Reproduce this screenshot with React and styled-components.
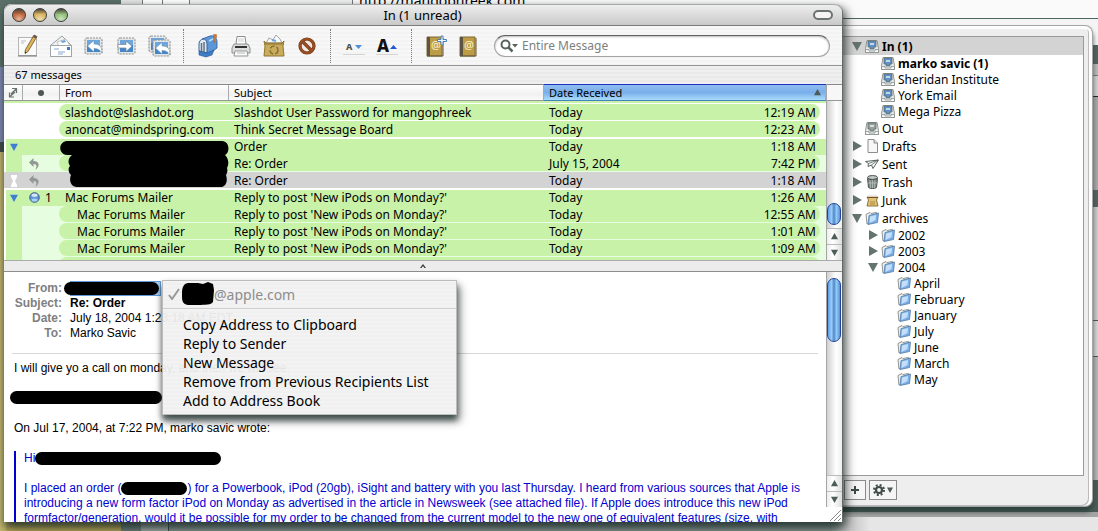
import React from 'react';
import styled, { createGlobalStyle, css } from 'styled-components';

const lucida = '"Noto Sans", "Open Sans", sans-serif';
const helvetica = '"Liberation Sans", Arial, sans-serif';

const green = '#c9f2a9';
const paleGreen = '#e6fddf';
const pinstripe = 'repeating-linear-gradient(#f7f7f7 0 2px, #f3f3f3 2px 4px)';

const GlobalStyle = createGlobalStyle`
  * { box-sizing: border-box; }
  body { margin: 0; overflow: hidden; }
  button, input { font: inherit; color: inherit; }
  button { padding: 0; border: 0; background: none; }
  svg { display: block; flex: none; }
`;

const Desktop = styled.div`
  position: relative;
  display: flex;
  align-items: stretch;
  height: 100vh;
  padding: 4px 5px 9px 4px;
  overflow: hidden;
  font-family: ${lucida};
  font-size: 12px;
  color: #000;
  background:
    linear-gradient(90deg, #5b7068 0 121px, #e4e4e4 121px 142px, #777 142px 143px, #fff 143px 162px, #777 162px 163px, #fff 163px 189px, #777 189px 190px, #f1f1f1 190px 352px, #777 352px 353px, #fafafa 353px) 0 0 / 100% 18px no-repeat,
    linear-gradient(#4a6660 0 1px, #f4f4f4 1px) 842px 18px / 100% 9px no-repeat,
    linear-gradient(#5b7068 0 67px, #8289b4 67px 142px, #3f4a48 142px 152px, #c5b76d 152px) 0 0 / 6px 100% no-repeat,
    linear-gradient(90deg, #b9a655 0 121px, #6d7c78 121px 141px, #a3a8a6 141px 168px, #3d4947 168px 169px, #84918d 169px 830px, #c4c4c4 850px, #e6e6e6 870px) 0 100% / 100% 14px no-repeat,
    linear-gradient(#f4f4f4 0 45px, #54635e 45px 64px, #bbb 64px 75px, #777 75px 76px, #d0d0d0 76px 96px, #222 96px 97px, #a9a9a9 97px 190px, #54635e 190px 207px, #ccc 207px 320px, #555 320px 321px, #d5d5d5 321px 356px, #555 356px 357px, #b7b7b7 357px 480px, #4b5c57 480px 512px, #a5a5a5 512px 517px, #4b5c57 517px 518px, #e4e4e4 518px);
`;

const BackgroundUrl = styled.span`
  position: absolute;
  top: -7px;
  left: 359px;
  font-size: 14px;
  line-height: 16px;
`;

const MailWindow = styled.main`
  position: relative;
  z-index: 2;
  flex: 1;
  min-width: 0;
  display: flex;
  flex-direction: column;
  background: #fff;
  border-radius: 8px 8px 0 0;
  box-shadow: 0 5px 9px rgba(30, 50, 45, 0.8), 1px 0 0 #8b8b8b, 6px 4px 10px rgba(0, 0, 0, 0.4);
`;

const TitleBar = styled.header`
  display: flex;
  align-items: center;
  height: 22px;
  padding: 0 9px 0 8px;
  border-bottom: 1px solid #7c7c7c;
  border-radius: 8px 8px 0 0;
  background: linear-gradient(#f0f0f0, #dedede 45%, #c9c9c9);
  box-shadow: inset 0 1px 0 #aaa;
`;

const WindowControls = styled.div`
  display: flex;
  gap: 7px;
  width: 76px;
`;

const Light = styled.button`
  width: 14px;
  height: 14px;
  border: 1px solid #3a3f3c;
  border-radius: 50%;
  background:
    radial-gradient(circle at 50% 85%, #fff8 0, transparent 50%),
    linear-gradient(#4b423e, ${({ tint }) => tint} 45%);
`;

const WindowTitle = styled.h1`
  flex: 1;
  margin: 0;
  font-size: 13px;
  font-weight: 400;
  line-height: 20px;
  text-align: center;
`;

const ToolbarToggle = styled.div`
  display: flex;
  justify-content: flex-end;
  width: 76px;

  button {
    width: 20px;
    height: 10px;
    border: 2px solid #6b7471;
    border-radius: 5px;
    background: #f4f4f4;
  }
`;

const Toolbar = styled.div`
  display: flex;
  align-items: center;
  height: 40px;
  padding: 0 12px 0 7px;
  border-bottom: 1px solid #949494;
  background: ${pinstripe};
`;

const ToolButton = styled.button`
  display: flex;
  align-items: center;
  justify-content: center;
  width: 33px;
  height: 32px;
`;

const Divider = styled.span`
  height: 34px;
  margin: 0 7px;
  border-left: 1px dotted #777;
`;

const SearchField = styled.label`
  display: flex;
  align-items: center;
  gap: 4px;
  flex: 1;
  height: 22px;
  margin-left: 9px;
  padding: 0 12px 0 5px;
  border: 1px solid #a3a3a3;
  border-top-color: #606060;
  border-radius: 11px;
  background: #fff;
  box-shadow: inset 0 1px 2px #bbb;

  input {
    flex: 1;
    min-width: 0;
    padding: 0;
    border: 0;
    outline: 0;
    background: transparent;
  }
  input::placeholder {
    color: #7d817d;
    opacity: 1;
  }
`;

const StatusLine = styled.div`
  height: 18px;
  padding-left: 11px;
  font-size: 11px;
  line-height: 18px;
  background: repeating-linear-gradient(#efefef 0 2px, #e9e9e9 2px 4px);
`;

const ListPane = styled.section`
  display: flex;
  height: 176px;
`;

const Messages = styled.table`
  display: flex;
  flex-direction: column;
  flex: 1;
  min-width: 0;

  thead { display: block; }
  tbody {
    display: flex;
    flex-direction: column;
    flex: 1;
    min-height: 0;
    overflow: hidden;
  }
  th, td { padding: 0; }
`;

const columns = css`
  display: grid;
  grid-template-columns: 19px 37px 169px minmax(0, 315fr) minmax(0, 282fr);
`;

const HeadRow = styled.tr`
  ${columns}
  height: 17px;
  border-top: 1px solid #888;
  border-bottom: 1px solid #999;
  font-size: 11px;
  line-height: 15px;
  background: linear-gradient(#fff, #f1f1f1 60%, #fafafa);
`;

const HeadCell = styled.th`
  display: flex;
  align-items: center;
  justify-content: ${({ center }) => (center ? 'center' : 'space-between')};
  border-right: 1px solid #aaa;
  font-weight: 400;
  && { padding: ${({ center }) => (center ? '0' : '0 4px 0 5px')}; }
  ${({ sorted }) => sorted && css`
    background: linear-gradient(#8fbdf0, #79aeea 50%, #a9dcfb);
    box-shadow: 0 -1px 0 #1c34c0, 0 1px 0 #4381bf;
  `}
`;

const PartialRow = styled.tr`
  flex: none;
  height: 3px;
  border-bottom: 1px solid #fff;
  background: ${green};
`;

const Row = styled.tr`
  ${columns}
  position: relative;
  flex: none;
  height: 17px;
  line-height: 17px;
  white-space: nowrap;
  background: ${({ kind }) => ({
    plain: '#fff',
    head: `linear-gradient(90deg, #fff 2px, transparent 2px), linear-gradient(#fff 1px, ${green} 1px)`,
    child: `linear-gradient(90deg, #fff 2px, ${green} 2px 18px, ${paleGreen} 18px)`,
    selected: 'linear-gradient(#d3d3d3 16px, #fff 16px)',
  }[kind])};

  ${({ kind }) => (kind === 'plain' || kind === 'child') && css`
    td:nth-child(n + 3) {
      height: 16px;
      background: ${green};
    }
    td:nth-child(3) {
      margin-left: -1px;
      padding-left: 6px;
      border-radius: 8px 0 0 8px;
    }
    td:nth-child(5) {
      margin-right: 6px;
      border-radius: 0 8px 8px 0;
    }
  `}
`;

const MarkCell = styled.td`
  display: flex;
  align-items: center;
  gap: 5px;
  justify-content: ${({ thread }) => (thread ? 'center' : 'flex-start')};
  && { padding-left: ${({ thread }) => (thread ? '0' : '6px')}; }
`;

const TextCell = styled.td`
  && { padding-left: 5px; }
  text-indent: ${({ nested }) => (nested ? '12px' : '0')};
`;

const DateCell = styled.td`
  display: flex;
  justify-content: space-between;
  && { padding: 0 ${({ inset }) => (inset ? 4 : 10)}px 0 5px; }
`;

const Scribble = styled.svg`
  position: absolute;
  z-index: 1;
  top: 3px;
  left: 56px;
`;

const Scrollbar = styled.div`
  display: flex;
  flex-direction: column;
  flex: ${({ tall }) => (tall ? 1 : 'none')};
  width: 16px;
  border-left: 1px solid #a5a5a5;
  background: linear-gradient(90deg, #cfcfcf, #fff 60%, #eee);
`;

const ScrollCorner = styled.div`
  height: 17px;
  border-top: 1px solid #888;
  border-bottom: 1px solid #999;
  background: #f7f7f7;
`;

const Track = styled.div`
  display: flex;
  flex-direction: column;
  justify-content: ${({ end }) => (end ? 'flex-end' : 'flex-start')};
  flex: 1;
  padding: 6px 1px 3px 0;
`;

const Thumb = styled.div`
  height: ${({ size }) => size}px;
  border: 1px solid #24449a;
  border-radius: 7px;
  background:
    linear-gradient(90deg, #5f9fe6, #9ccbf6 30%, #4c88c9 50%, #95cbf8 70%, #5793d6);
`;

const Arrow = styled.button`
  display: flex;
  align-items: center;
  justify-content: center;
  height: 16px;
  border-top: 1px solid #bbb;
  background: linear-gradient(90deg, #eee, #fff 40%, #ddd);
`;

const Splitter = styled.div`
  display: flex;
  justify-content: center;
  height: 12px;
  padding-top: 3px;
  border-top: 1px solid #aaa;
  border-bottom: 1px solid #8d8d8d;
  background: #ececec;
`;

const Reader = styled.section`
  position: relative;
  display: flex;
  flex: 1;
  min-height: 0;
  font-family: ${helvetica};
  line-height: 15px;
`;

const Letter = styled.article`
  flex: 1;
  min-width: 0;
  padding: 9px 8px 0;
  overflow: hidden;
`;

const Fields = styled.dl`
  display: grid;
  grid-template-columns: 50px 1fr;
  column-gap: 8px;
  margin: 0;
  padding-bottom: 12px;
  border-bottom: 1px solid #d6d6d6;

  dt {
    color: #7f7f7f;
    font-weight: 700;
    text-align: right;
  }
  dd {
    display: flex;
    align-items: center;
    height: 15px;
    margin: 0;
  }
`;

const Sender = styled.span`
  display: flex;
  align-items: center;
  width: 91px;
  height: 15px;
  border: 1px solid #5f97d8;
  background: #a9ccf2;
`;

const Redacted = styled.span`
  display: inline-block;
  flex: none;
  width: ${({ width }) => width}px;
  height: 13px;
  margin-left: ${({ pull }) => (pull ? '-7px' : '0')};
  border-radius: 7px;
  background: #000;
  vertical-align: middle;
`;

const Body = styled.div`
  padding: 7px 0 0 2px;

  p { margin: 0 0 15px; }
`;

const Censored = styled.p`
  display: flex;
  height: 15px;
  && { margin-left: -4px; }
`;

const Quote = styled.blockquote`
  margin: 0;
  padding-left: 8px;
  border-left: 2px solid #0000d0;
  color: #0000d0;
`;

const ReaderSide = styled.div`
  display: flex;
  flex-direction: column;
`;

const Menu = styled.ul`
  position: absolute;
  z-index: 3;
  top: 8px;
  left: 158px;
  width: 295px;
  height: 135px;
  margin: 0;
  padding: 4px 0 0;
  border: 1px solid #bcbcbc;
  list-style: none;
  font-family: ${lucida};
  font-size: 14px;
  background: repeating-linear-gradient(rgba(242, 242, 242, 0.95) 0 2px, rgba(239, 239, 239, 0.95) 2px 4px);
  box-shadow: 0 5px 6px rgba(30, 50, 45, 0.75), 3px 6px 9px rgba(0, 0, 0, 0.4);
`;

const MenuItem = styled.li`
  padding-left: 20px;
  line-height: 19px;
  white-space: nowrap;
`;

const MenuAddress = styled.li`
  display: flex;
  align-items: center;
  height: 24px;
  margin-bottom: 6px;
  padding: 0 0 5px 5px;
  border-bottom: 1px solid #cfcfcf;
  color: #8d8d8d;

  svg + svg { margin-left: 2px; }
`;

const Drawer = styled.aside`
  position: relative;
  z-index: 1;
  display: flex;
  flex-direction: column;
  flex: none;
  width: 251px;
  margin: 21px 0 15px;
  padding: 10px 8px 3px 1px;
  border: 1px solid #a5a5a5;
  border-left: 0;
  border-radius: 0 8px 8px 0;
  background: #eee;
  box-shadow: inset -3px 0 0 #fdfdfd, inset 0 3px 0 #fdfdfd, inset -4px -1px 0 #bbb, 0 5px 5px rgba(40, 60, 55, 0.8);
`;

const Mailboxes = styled.ul`
  flex: 1;
  min-height: 0;
  margin: 0;
  padding: 0;
  overflow: hidden;
  border: 1px solid #9a9a9a;
  border-left: 0;
  list-style: none;
  background: #fff;
`;

const Mailbox = styled.li`
  display: flex;
  align-items: center;
  height: ${({ depth }) => (depth ? 16 : 18)}px;
  padding-left: ${({ depth }) => 9 + depth * 16}px;
  font-weight: ${({ unread }) => (unread ? 700 : 400)};
  background: ${({ selected }) => (selected ? '#d3d3d3' : 'transparent')};
  white-space: nowrap;
`;

const Twisty = styled.span`
  width: 13px;
`;

const MailboxName = styled.span`
  margin-left: 3px;
`;

const DrawerBar = styled.div`
  display: flex;
  gap: 3px;
  height: 27px;
  padding: 4px 0 0 1px;
`;

const SmallButton = styled.button`
  display: flex;
  align-items: center;
  justify-content: center;
  gap: 2px;
  width: ${({ wide }) => (wide ? 28 : 22)}px;
  height: 20px;
  border: 1px solid #8a8a8a;
  background: #f5f5f5;
`;

const ComposeIcon = () => (
  <svg width="22" height="24" viewBox="0 0 22 24">
    <rect x="1.5" y="3.5" width="18" height="18" fill="#fafafa" stroke="#b5b5b5" />
    <path d="M1 22h19" stroke="#777" />
    <path d="M4 7h5M4 9h3" stroke="#bbb" />
    <path d="M17 1l3 1.500-9 15-3 2 .3-3.500z" fill="#dfb656" stroke="#665233" strokeWidth=".8" />
    <path d="M17 1l3 1.500-1.300 2-3-1.500z" fill="#6b5750" />
    <path d="M8.200 17.500l-.2 2 1.600-1z" fill="#222" />
  </svg>
);

const GetMailIcon = () => (
  <svg width="24" height="24" viewBox="0 0 24 24">
    <path d="M2 11L13 2l9 9v3H2z" fill="#eef1f3" stroke="#9aa3a6" />
    <path d="M8 8l9-3 4 7-10 2z" fill="#fff" stroke="#aaa" strokeWidth=".7" />
    <path d="M12 7l4-1 1 2-4 1z" fill="#6da1dc" />
    <rect x="1.500" y="11.500" width="21" height="11" fill="#fff" stroke="#a0a6a8" />
    <rect x="18" y="13" width="3" height="3" fill="#3f77c4" />
    <path d="M5 15h5M9 18h7M9 20h5" stroke="#8ba8cc" />
  </svg>
);

const Stamp = ({ x = 0, y = 0 }) => (
  <g transform={`translate(${x} ${y})`}>
    <rect x="1" y="1" width="17" height="16" rx="2" fill="#e5e5e5" stroke="#8e9696" strokeWidth="1.200" strokeDasharray="2 1" />
    <rect x="3" y="3" width="13" height="12" fill="#4387cb" />
    <rect x="3" y="3" width="13" height="5" fill="#6ba6df" />
  </g>
);

const replyArrow = 'M3.500 9l6.500-5.500v3.500c6 0 8 3 8 9-1.500-3-4-4.500-8-4.500v3.500z';

const ReplyIcon = () => (
  <svg width="19" height="18" viewBox="0 0 19 18">
    <Stamp />
    <path d={replyArrow} fill="#fff" stroke="#6f8aa0" strokeWidth=".5" />
  </svg>
);

const ForwardIcon = () => (
  <svg width="19" height="18" viewBox="0 0 19 18">
    <Stamp />
    <path d="M1 7.500h8V4l6 5.200-6 5.300V11H1z" fill="#fff" stroke="#718697" strokeWidth=".7" />
  </svg>
);

const ReplyAllIcon = () => (
  <svg width="23" height="24" viewBox="0 0 23 24">
    <Stamp x={0} y={1} />
    <Stamp x={4} y={5} />
    <path d={replyArrow} transform="translate(4 5)" fill="#fff" stroke="#6f8aa0" strokeWidth=".5" />
  </svg>
);

const MailboxIcon = () => (
  <svg width="22" height="26" viewBox="0 0 22 26">
    <path d="M5 6l8-3c4-1 7 2 7 6v6L9 23V11C9 8 7 6 5 6z" fill="#5b96d6" stroke="#2d5b98" strokeWidth=".8" />
    <path d="M2 11c0-6 8-7 8 0v9l-8-2z" fill="#dce9f5" stroke="#37629b" />
    <path d="M4.500 10v8M7 9v10" stroke="#66717c" strokeWidth="1.500" />
    <path d="M2 18l8 2 7-3-2 5-6 2-7-2z" fill="#3f7cc6" stroke="#2b558e" strokeWidth=".6" />
    <path d="M12 8l6-3" stroke="#b8dcfa" strokeWidth="1.500" />
    <path d="M17 10V2h2v3" fill="none" stroke="#c06a26" strokeWidth="1.500" />
  </svg>
);

const PrintIcon = () => (
  <svg width="20" height="22" viewBox="0 0 20 22">
    <path d="M5 9l1-7.500h8L15 9" fill="#fff" stroke="#8c8c8c" />
    <path d="M7 4h6M7 6h6" stroke="#ccc" />
    <path d="M3 9h14l2 4v5H1v-5z" fill="#dcdede" stroke="#8b9090" />
    <path d="M4 12h12" stroke="#333" strokeWidth="2" />
    <path d="M4 16h12l1 5H3z" fill="#fafafa" stroke="#999" />
    <path d="M6 18h8" stroke="#bbb" />
  </svg>
);

const JunkIcon = () => (
  <svg width="22" height="24" viewBox="0 0 22 24">
    <path d="M3 9l3-5 4 2 3-5 4 4 2 4z" fill="#fbfbfb" stroke="#9ba4a8" />
    <path d="M9 6l4 1" stroke="#6fa3db" strokeWidth="2" />
    <path d="M1 7l2 2h16l2-2-1 5 1 10H1l1-10z" fill="#c9ac5c" stroke="#927632" />
    <path d="M2 10h18" stroke="#8f7431" />
    <circle cx="11" cy="16" r="4" fill="none" stroke="#8a7236" strokeWidth="1.500" strokeDasharray="5 2" />
  </svg>
);

const DeleteIcon = () => (
  <svg width="18" height="18" viewBox="0 0 18 18">
    <circle cx="9" cy="9" r="7" fill="#f2e8e2" stroke="#70371a" strokeWidth="3.200" />
    <path d="M4 4l10 10" stroke="#70371a" strokeWidth="3.200" />
    <circle cx="9" cy="9" r="7" fill="none" stroke="#9a4f20" strokeWidth="2" />
    <path d="M4 4l10 10" stroke="#9a4f20" strokeWidth="2" />
  </svg>
);

const FontIcon = ({ big }) => (
  <svg width="24" height="24" viewBox="0 0 24 24">
    <text x={big ? 1 : 3} y={big ? 18 : 16} fontFamily='"Noto Sans", sans-serif' fontWeight="800" fontSize={big ? 17 : 9} fill={big ? '#111' : '#4a5350'}>A</text>
    {big ? <path d="M14 15l3.500-4 3.500 4z" fill="#2456d8" /> : <path d="M12 11h7l-3.500 4z" fill="#4c8fd6" />}
    <path d="M0 20.500h22" stroke="#d4d4d4" />
  </svg>
);

const BookIcon = ({ add }) => (
  <svg width="22" height="24" viewBox="0 0 22 24">
    <path d="M2 3h15v19H2z" fill="#bd9c48" stroke="#806a34" />
    <path d="M2 3h3v19H2z" fill="#5d5541" />
    <path d="M2 22h16V4" fill="none" stroke="#66583a" />
    <text x="6" y="15" fontFamily='"Noto Sans", sans-serif' fontSize="11" fill="#fff6cf">@</text>
    {add && <path d="M16 2h2v3.500h3.500v2H18V11h-2V7.500h-3.500v-2H16z" fill="#eef6ff" stroke="#4c80b5" />}
  </svg>
);

const SearchIcon = () => (
  <svg width="18" height="14" viewBox="0 0 18 14">
    <circle cx="5.500" cy="5.500" r="4" fill="none" stroke="#58635f" strokeWidth="2" />
    <path d="M8.500 8.500l4 4" stroke="#58635f" strokeWidth="2.500" />
    <path d="M12 5h6l-3 3.500z" fill="#58635f" />
  </svg>
);

const Triangle = ({ dir = 'down', color = '#4d5c57', size = 7 }) => (
  <svg width={size} height={size} viewBox="0 0 10 10">
    <path d={{ down: 'M0 1h10L5 10z', up: 'M0 9h10L5 0z', right: 'M1 0v10l9-5z' }[dir]} fill={color} />
  </svg>
);

const ThreadIcon = () => (
  <svg width="10" height="12" viewBox="0 0 10 12">
    <path d="M4 1.500h4.500V6M8.500 1.500L3 7M1.500 5.500V10H6M1.500 10L7 5" fill="none" stroke="#68726f" strokeWidth="1.200" />
  </svg>
);

const RepliedIcon = () => (
  <svg width="11" height="12" viewBox="0 0 11 12">
    <path d="M0 4.500L4.500 0v3C10 3 12 8 6 12c2.500-4 1.500-6-1.500-6v3z" fill="#929893" />
  </svg>
);

const HourglassIcon = () => (
  <svg width="8" height="12" viewBox="0 0 8 12">
    <path d="M1 0h6v2L5 6l2 4v2H1v-2l2-4-2-4z" fill="#fff" />
  </svg>
);

const UnreadIcon = () => (
  <svg width="11" height="11" viewBox="0 0 11 11">
    <circle cx="5.500" cy="5.500" r="4.800" fill="#5f97d8" stroke="#3f5c88" />
    <ellipse cx="5.500" cy="3.300" rx="3" ry="1.700" fill="#d5e6f6" />
    <ellipse cx="5.500" cy="8" rx="3" ry="1.500" fill="#a6d2f8" />
  </svg>
);

const TrayIcon = ({ color = '#5f90c9' }) => (
  <svg width="14" height="14" viewBox="0 0 14 14">
    <path d="M2 1.500h10l1.500 8v4h-13v-4z" fill="#e9ebea" stroke="#8b9491" />
    <path d="M3 2h8v6H9v2H5V8H3z" fill={color} stroke="#5c6966" strokeWidth=".8" />
    <path d="M5 4h4v2H5z" fill="#ffffffa0" />
    <path d="M.5 10.500H4v1.500h6v-1.500h3.500v3H.5z" fill="#f6f6f6" stroke="#7b8582" strokeWidth=".7" />
  </svg>
);

const DraftIcon = () => (
  <svg width="14" height="14" viewBox="0 0 14 14">
    <path d="M3 .5h6l3.500 3.500v9.500H3z" fill="#f7f7f7" stroke="#8d8d8d" />
    <path d="M9 .5V4h3.500" fill="#ddd" stroke="#8d8d8d" />
  </svg>
);

const SentIcon = () => (
  <svg width="14" height="14" viewBox="0 0 14 14">
    <path d="M.5 4.500L13.500 3 8 11.500 6.500 8 3 9.500l.5-3z" fill="#fafafa" stroke="#59635f" />
    <path d="M13 3L6.500 8M13 3L3.500 6.500" stroke="#59635f" strokeWidth=".8" />
  </svg>
);

const TrashIcon = () => (
  <svg width="14" height="14" viewBox="0 0 14 14">
    <ellipse cx="7.500" cy="2.500" rx="5" ry="2" fill="#c0c5c3" stroke="#4c5653" />
    <path d="M2.500 3.500l1 9c2 1.500 6 1.500 8 0l1-9c-3 1.700-7 1.700-10 0z" fill="#7b8582" stroke="#4c5653" />
    <path d="M5 5l.5 8M7.500 5v8M10 5l-.5 8M3 8h9" stroke="#c1c8c5" strokeWidth=".7" />
  </svg>
);

const JunkBoxIcon = () => (
  <svg width="14" height="14" viewBox="0 0 14 14">
    <path d="M2 4h11l-1.500 3 1.500 6H2l1.500-6z" fill="#dfc271" stroke="#8b7438" />
    <path d="M3 2.500h9" stroke="#eee" strokeWidth="2" />
    <path d="M2.500 4.500h10" stroke="#7f4b23" />
    <path d="M5 9h5M5 11h5" stroke="#a98c45" />
  </svg>
);

const FolderIcon = () => (
  <svg width="14" height="14" viewBox="0 0 14 14">
    <path d="M1 3.500L5 1.500l1 1 5.500-1v9L2 13z" fill="#f4f4f4" stroke="#8a9391" />
    <path d="M4 4.500L13.500 2l-1 9.500L3 13.500z" fill="#79b0ea" stroke="#5679a3" strokeWidth=".8" />
    <path d="M5 5.500l6-1.500-.5 5-6 3z" fill="#c3e0fa" />
  </svg>
);

const GearIcon = () => (
  <svg width="12" height="12" viewBox="0 0 12 12">
    <circle cx="6" cy="6" r="3" fill="none" stroke="#3f4b47" strokeWidth="2.200" />
    <circle cx="6" cy="6" r="5" fill="none" stroke="#3f4b47" strokeWidth="2" strokeDasharray="2 1.930" />
  </svg>
);

const PlusIcon = () => (
  <svg width="8" height="8" viewBox="0 0 8 8">
    <path d="M4 0v8M0 4h8" stroke="#3f4b47" strokeWidth="2" />
  </svg>
);

const tools = [
  [['New', ComposeIcon], ['Get Mail', GetMailIcon], ['Reply', ReplyIcon], ['Forward', ForwardIcon], ['Reply All', ReplyAllIcon]],
  [['Mailboxes', MailboxIcon], ['Print', PrintIcon], ['Junk', JunkIcon], ['Delete', DeleteIcon]],
  [['Smaller', FontIcon], ['Bigger', () => <FontIcon big />]],
  [['Add Address', () => <BookIcon add />], ['Address Book', BookIcon]],
];

const forum = { from: 'Mac Forums Mailer', subject: "Reply to post 'New iPods on Monday?'", date: 'Today' };

const messages = [
  { kind: 'plain', from: 'slashdot@slashdot.org', subject: 'Slashdot User Password for mangophreek', date: 'Today', time: '12:19 AM' },
  { kind: 'plain', from: 'anoncat@mindspring.com', subject: 'Think Secret Message Board', date: 'Today', time: '12:23 AM' },
  { kind: 'head', hidden: true, subject: 'Order', date: 'Today', time: '1:18 AM' },
  { kind: 'child', replied: true, subject: 'Re: Order', date: 'July 15, 2004', time: '7:42 PM' },
  { kind: 'selected', replied: true, subject: 'Re: Order', date: 'Today', time: '1:18 AM' },
  { kind: 'head', unread: 1, ...forum, time: '1:26 AM' },
  { kind: 'child', ...forum, time: '12:55 AM' },
  { kind: 'child', ...forum, time: '1:01 AM' },
  { kind: 'child', ...forum, time: '1:09 AM' },
  { kind: 'child' },
];

const GrayTray = () => <TrayIcon color="#98a09d" />;

const mailboxes = [
  { name: 'In (1)', icon: TrayIcon, depth: 0, arrow: 'down', unread: true, selected: true },
  { name: 'marko savic (1)', icon: TrayIcon, depth: 1, unread: true },
  { name: 'Sheridan Institute', icon: TrayIcon, depth: 1 },
  { name: 'York Email', icon: TrayIcon, depth: 1 },
  { name: 'Mega Pizza', icon: TrayIcon, depth: 1 },
  { name: 'Out', icon: GrayTray, depth: 0 },
  { name: 'Drafts', icon: DraftIcon, depth: 0, arrow: 'right' },
  { name: 'Sent', icon: SentIcon, depth: 0, arrow: 'right' },
  { name: 'Trash', icon: TrashIcon, depth: 0, arrow: 'right' },
  { name: 'Junk', icon: JunkBoxIcon, depth: 0, arrow: 'right' },
  { name: 'archives', icon: FolderIcon, depth: 0, arrow: 'down' },
  { name: '2002', icon: FolderIcon, depth: 1, arrow: 'right' },
  { name: '2003', icon: FolderIcon, depth: 1, arrow: 'right' },
  { name: '2004', icon: FolderIcon, depth: 1, arrow: 'down' },
  ...['April', 'February', 'January', 'July', 'June', 'March', 'May'].map(name => ({ name, icon: FolderIcon, depth: 2 })),
];

const menuItems = [
  'Copy Address to Clipboard',
  'Reply to Sender',
  'New Message',
  'Remove from Previous Recipients List',
  'Add to Address Book',
];

const ScrollArrows = () => (
  <>
    <Arrow aria-label="Scroll up"><Triangle dir="up" /></Arrow>
    <Arrow aria-label="Scroll down"><Triangle /></Arrow>
  </>
);

const MessageRow = ({ kind, hidden, from, replied, unread, subject, date, time }) => (
  <Row kind={kind}>
    <MarkCell thread>
      {kind === 'head' && <Triangle color="#3f7fd0" size={8} />}
      {kind === 'selected' && <HourglassIcon />}
    </MarkCell>
    <MarkCell>
      {replied && <RepliedIcon />}
      {unread && <><UnreadIcon />{unread}</>}
    </MarkCell>
    <TextCell nested={kind === 'child'}>
      {from}
      {hidden && (
        <Scribble width="169" height="48" viewBox="0 0 169 48">
          <path d="M7 0h155c8 0 8 12 3 14 4 4 4 9 2 13 1 3 0 5-1 7 2 6 0 11-4 12H17c-7 0-8-8-6-12-3-3-3-7-1-9-3-4-1-9 2-11H7C-2 13-2 1 7 0z" />
        </Scribble>
      )}
    </TextCell>
    <TextCell>{subject}</TextCell>
    <DateCell inset={kind === 'child' || kind === 'plain'}>
      <span>{date}</span>
      <span>{time}</span>
    </DateCell>
  </Row>
);

const MessageList = () => (
  <ListPane>
    <Messages>
      <thead>
        <HeadRow>
          <HeadCell center><ThreadIcon /></HeadCell>
          <HeadCell center>
            <svg width="6" height="6"><circle cx="3" cy="3" r="3" fill="#4d5753" /></svg>
          </HeadCell>
          <HeadCell>From</HeadCell>
          <HeadCell>Subject</HeadCell>
          <HeadCell sorted>Date Received <Triangle dir="up" /></HeadCell>
        </HeadRow>
      </thead>
      <tbody>
        <PartialRow />
        {messages.map((message, i) => <MessageRow key={i} {...message} />)}
      </tbody>
    </Messages>
    <Scrollbar>
      <ScrollCorner />
      <Track end>
        <Thumb size={22} />
      </Track>
      <ScrollArrows />
    </Scrollbar>
  </ListPane>
);

const AddressMenu = () => (
  <Menu role="menu">
    <MenuAddress role="menuitem">
      <svg width="12" height="12" viewBox="0 0 12 12">
        <path d="M1 7l3 4 7-10" fill="none" stroke="#999" strokeWidth="2" />
      </svg>
      <svg width="32" height="24" viewBox="0 0 32 24">
        <path d="M6 1h10l5 1 5-2 5 2 1 6-1 12c-3 4-8 2-12 3H6c-6-1-6-5-6-10C0 8 0 2 6 1z" />
      </svg>
      @apple.com
    </MenuAddress>
    {menuItems.map(item => <MenuItem role="menuitem" key={item}>{item}</MenuItem>)}
  </Menu>
);

const MessageReader = () => (
  <Reader>
    <Letter>
      <Fields>
        <dt>From:</dt>
        <dd><Sender><Redacted width={95} pull /></Sender></dd>
        <dt>Subject:</dt>
        <dd><b>Re: Order</b></dd>
        <dt>Date:</dt>
        <dd>July 18, 2004 1:23:18 AM EDT</dd>
        <dt>To:</dt>
        <dd>Marko Savic</dd>
      </Fields>
      <Body>
        <p>I will give yo a call on monday, and then we will see.</p>
        <Censored><Redacted width={152} /></Censored>
        <p>On Jul 17, 2004, at 7:22 PM, marko savic wrote:</p>
        <Quote>
          <p>Hi<Redacted width={186} /></p>
          <p>
            I placed an order (<Redacted width={66} />) for a Powerbook, iPod (20gb), iSight and battery with you last Thursday. I heard from various sources that Apple is introducing a new form factor iPod on Monday as advertised in the article in Newsweek (see attached file). If Apple does introduce this new iPod formfactor/generation, would it be possible for my order to be changed from the current model to the new one of equivalent features (size, with
          </p>
        </Quote>
      </Body>
    </Letter>
    <ReaderSide>
      <Scrollbar tall>
        <Track>
          <Thumb size={64} />
        </Track>
        <ScrollArrows />
      </Scrollbar>
      <svg width="16" height="15" viewBox="0 0 16 15">
        <path d="M4 14L15 3M8 14l7-7M12 14l3-3" stroke="#888" />
      </svg>
    </ReaderSide>
    <AddressMenu />
  </Reader>
);

const MailboxDrawer = () => (
  <Drawer>
    <Mailboxes>
      {mailboxes.map(({ name, icon: Icon, arrow, ...rest }) => (
        <Mailbox key={name} {...rest}>
          <Twisty>{arrow && <Triangle dir={arrow} color="#65736e" size={10} />}</Twisty>
          <Icon />
          <MailboxName>{name}</MailboxName>
        </Mailbox>
      ))}
    </Mailboxes>
    <DrawerBar>
      <SmallButton aria-label="Add mailbox"><PlusIcon /></SmallButton>
      <SmallButton wide aria-label="Actions"><GearIcon /><Triangle size={6} /></SmallButton>
    </DrawerBar>
  </Drawer>
);

const App = () => (
  <Desktop>
    <GlobalStyle />
    <BackgroundUrl>http://mangophreek.com</BackgroundUrl>
    <MailWindow>
      <TitleBar>
        <WindowControls>
          <Light tint="#c4673b" aria-label="Close" />
          <Light tint="#d8b45c" aria-label="Minimize" />
          <Light tint="#92c07a" aria-label="Zoom" />
        </WindowControls>
        <WindowTitle>In (1 unread)</WindowTitle>
        <ToolbarToggle><button aria-label="Toggle toolbar" /></ToolbarToggle>
      </TitleBar>
      <Toolbar>
        {tools.map((group, i) => (
          <React.Fragment key={i}>
            {i > 0 && <Divider />}
            {group.map(([label, Icon]) => (
              <ToolButton key={label} aria-label={label}><Icon /></ToolButton>
            ))}
          </React.Fragment>
        ))}
        <SearchField>
          <SearchIcon />
          <input type="text" placeholder="Entire Message" aria-label="Search" />
        </SearchField>
      </Toolbar>
      <StatusLine>67 messages</StatusLine>
      <MessageList />
      <Splitter>
        <svg width="6" height="4" viewBox="0 0 6 4"><path d="M0 4l3-4 3 4H4.500L3 2 1.500 4z" fill="#333" /></svg>
      </Splitter>
      <MessageReader />
    </MailWindow>
    <MailboxDrawer />
  </Desktop>
);

export default App;
